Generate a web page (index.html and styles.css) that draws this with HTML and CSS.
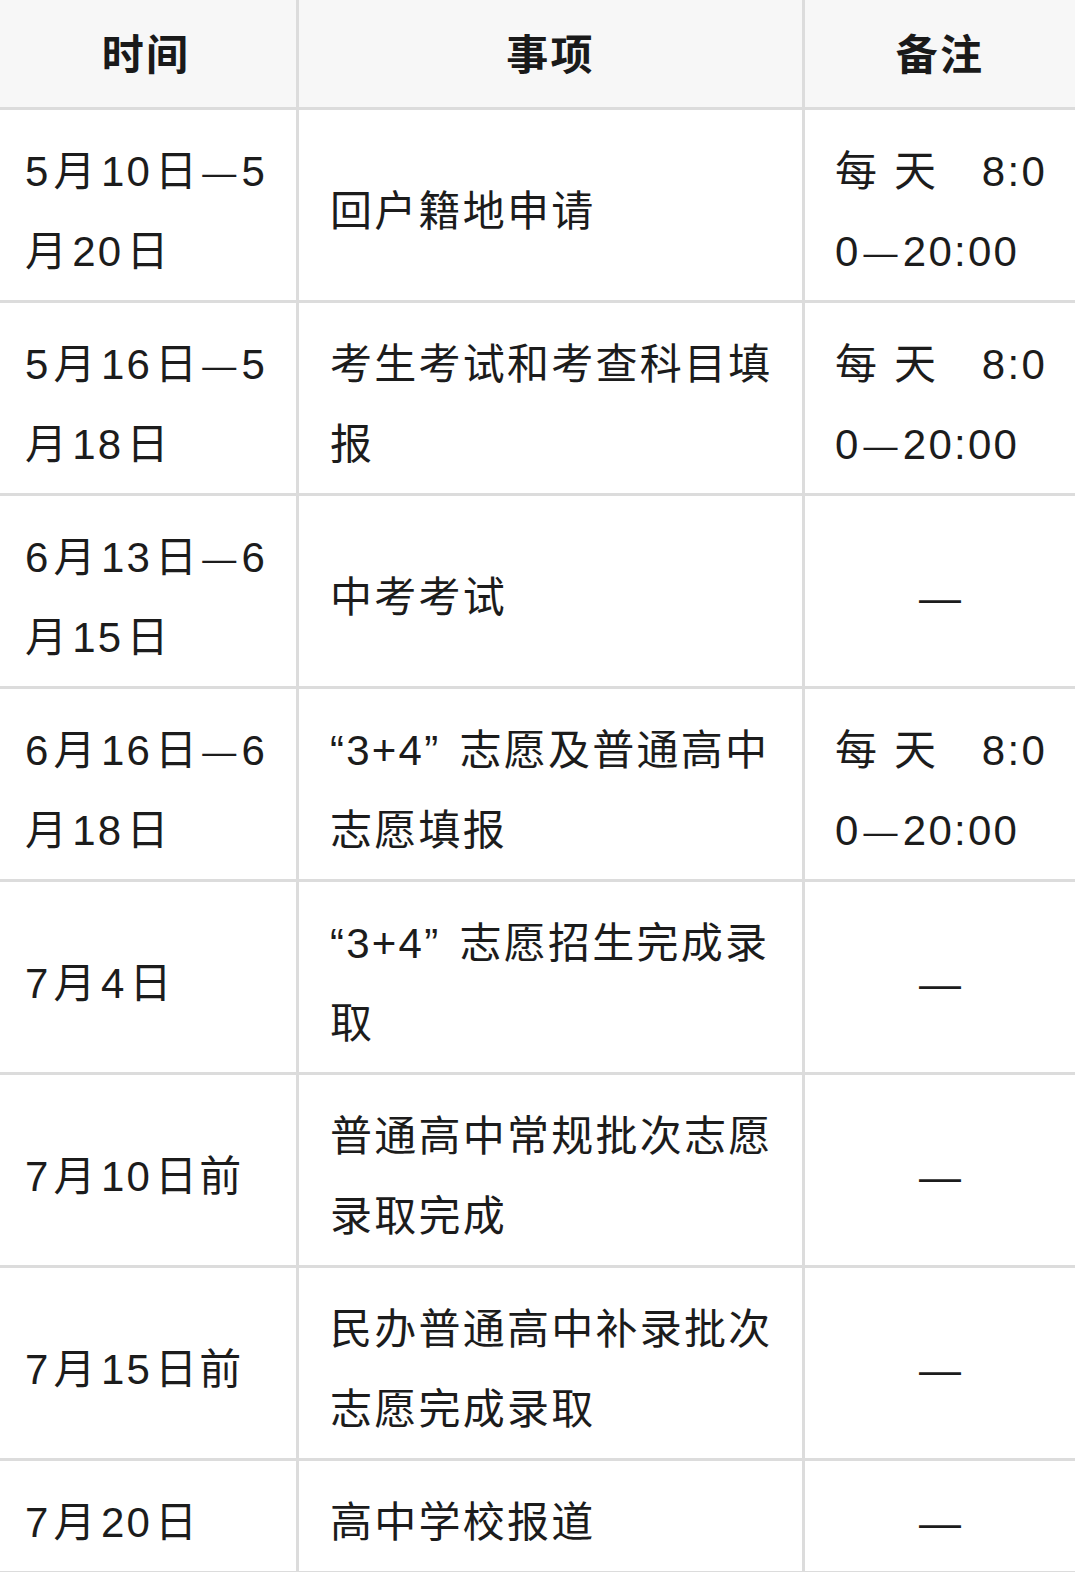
FILE: index.html
```html
<!DOCTYPE html>
<html lang="zh-CN">
<head>
<meta charset="utf-8">
<title>中考时间安排</title>
<link rel="stylesheet" href="styles.css">
</head>
<body>
<div class="sched">
  <div class="cell head c1"><p class="t">时间</p></div>
  <div class="cell head c2"><p class="t">事项</p></div>
  <div class="cell head c3"><p class="t">备注</p></div>

  <div class="cell c1"><p class="t"><span class="nr">5</span>月<span class="n">10</span>日<span class="rd">—</span>5月<span class="n">20</span>日</p></div>
  <div class="cell c2"><p class="t">回户籍地申请</p></div>
  <div class="cell c3"><p class="t"><span class="jl">每天 8:0</span>0<span class="rd">—</span>20:00</p></div>

  <div class="cell c1"><p class="t"><span class="nr">5</span>月<span class="n">16</span>日<span class="rd">—</span>5月<span class="n">18</span>日</p></div>
  <div class="cell c2"><p class="t">考生考试和考查科目填报</p></div>
  <div class="cell c3"><p class="t"><span class="jl">每天 8:0</span>0<span class="rd">—</span>20:00</p></div>

  <div class="cell c1"><p class="t"><span class="nr">6</span>月<span class="n">13</span>日<span class="rd">—</span>6月<span class="n">15</span>日</p></div>
  <div class="cell c2"><p class="t">中考考试</p></div>
  <div class="cell c3"><p class="t dash">—</p></div>

  <div class="cell c1"><p class="t"><span class="nr">6</span>月<span class="n">16</span>日<span class="rd">—</span>6月<span class="n">18</span>日</p></div>
  <div class="cell c2"><p class="t">“3+4<span class="cq">”</span>志愿及普通高中志愿填报</p></div>
  <div class="cell c3"><p class="t"><span class="jl">每天 8:0</span>0<span class="rd">—</span>20:00</p></div>

  <div class="cell c1"><p class="t"><span class="nr">7</span>月<span class="n">4</span>日</p></div>
  <div class="cell c2"><p class="t">“3+4<span class="cq">”</span>志愿招生完成录取</p></div>
  <div class="cell c3"><p class="t dash">—</p></div>

  <div class="cell c1"><p class="t"><span class="nr">7</span>月<span class="n">10</span>日前</p></div>
  <div class="cell c2"><p class="t">普通高中常规批次志愿录取完成</p></div>
  <div class="cell c3"><p class="t dash">—</p></div>

  <div class="cell c1"><p class="t"><span class="nr">7</span>月<span class="n">15</span>日前</p></div>
  <div class="cell c2"><p class="t">民办普通高中补录批次志愿完成录取</p></div>
  <div class="cell c3"><p class="t dash">—</p></div>

  <div class="cell c1"><p class="t"><span class="nr">7</span>月<span class="n">20</span>日</p></div>
  <div class="cell c2"><p class="t">高中学校报道</p></div>
  <div class="cell c3"><p class="t dash">—</p></div>
</div>
</body>
</html>
```

FILE: styles.css
```css
html, body {
  margin: 0;
  padding: 0;
  background: #ffffff;
}

body {
  font-family: "Liberation Sans", "Noto Sans CJK SC", sans-serif;
  color: #1c1c1c;
  overflow-x: hidden;
}

.sched {
  display: grid;
  grid-template-columns: 303px 506px 270px;
  width: 1079px;
  margin-left: -4px;
  font-size: 42px;
  line-height: 80px;
  letter-spacing: 2.25px;
}

.cell {
  display: flex;
  flex-direction: column;
  justify-content: center;
  border-right: 3px solid #dcdcdc;
  border-bottom: 3px solid #dcdcdc;
  padding: 22px 10px 8px 29px;
}

.cell.c2 {
  padding-left: 31px;
  padding-right: 12px;
}

.cell.c3 {
  border-right: 0;
  padding-left: 30px;
  padding-right: 28px;
}

.cell.head {
  background: #f7f7f7;
  font-weight: 700;
  text-align: center;
  padding: 16px 0 11px;
  color: #1a1a1a;
}

.t {
  margin: 0;
}

/* spacing between Latin digits and CJK characters */
.n {
  margin: 0 3px;
}

.nr {
  margin-right: 3px;
}

/* range dash, a little shorter than a full em */
.rd {
  font-size: 34px;
  line-height: 1;
  margin: 0 3px;
  vertical-align: 2px;
}

/* closing quote keeps the wide CJK spacing after it */
.cq {
  margin-right: 19px;
}

.jl {
  display: block;
  text-align: justify;
  text-align-last: justify;
}

.dash {
  text-align: center;
}
```
